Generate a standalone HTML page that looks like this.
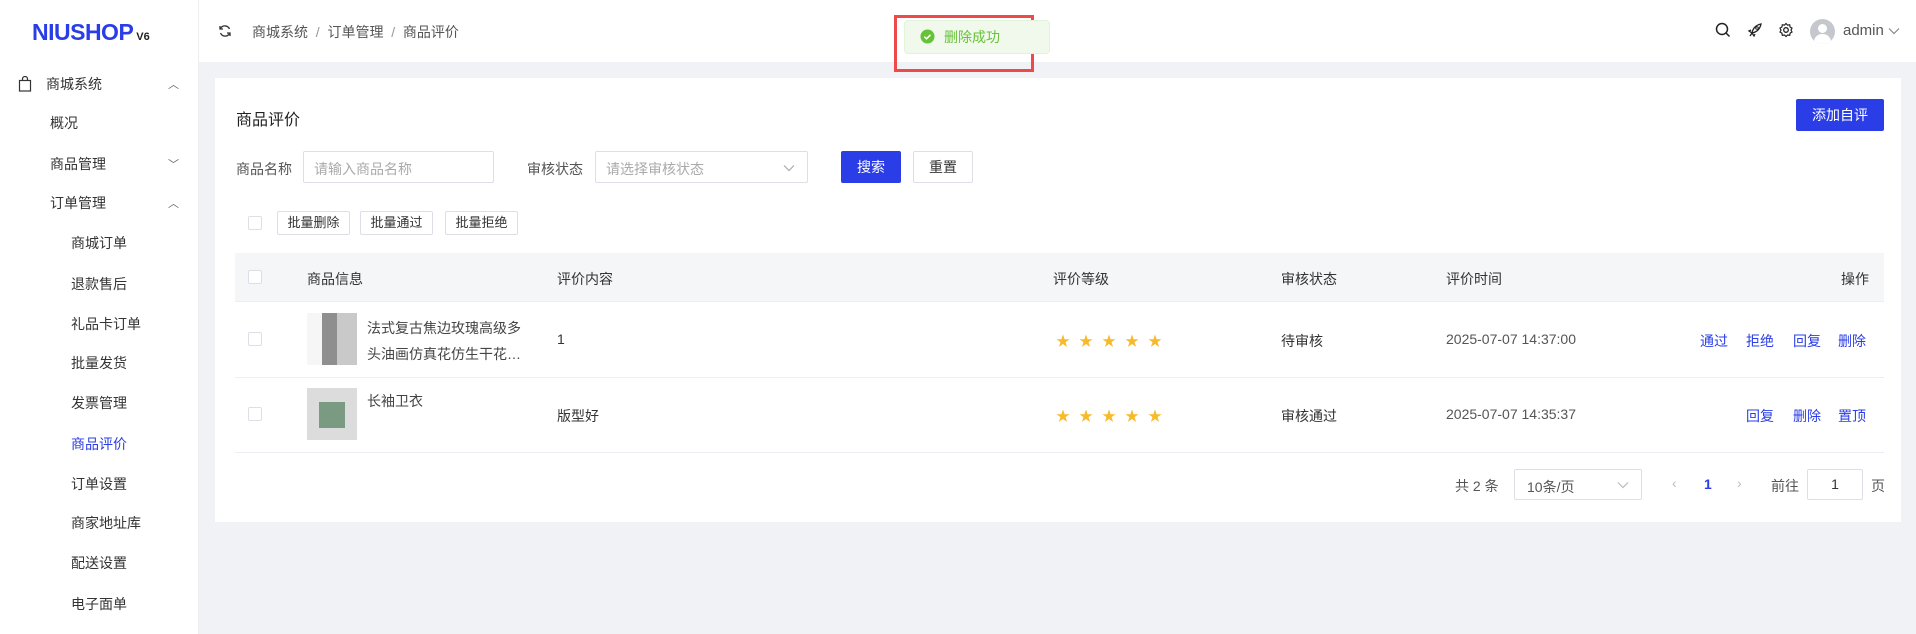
<!DOCTYPE html>
<html><head><meta charset="utf-8"><style>
*{margin:0;padding:0;box-sizing:border-box}
body{width:1916px;height:634px;background:#f0f2f5;font-family:"Liberation Sans","Noto Sans CJK SC",sans-serif;font-size:14px;color:#333;position:relative;overflow:hidden}
.a{position:absolute;white-space:nowrap}
.side{position:absolute;left:0;top:0;width:199px;height:634px;background:#fff;border-right:1px solid #eee}
.hdr{position:absolute;left:199px;top:0;width:1717px;height:62px;background:#fff}
.card{position:absolute;left:215px;top:78px;width:1686px;height:444px;background:#fff}
.cb{position:absolute;width:14px;height:14px;border:1px solid #dcdfe6;border-radius:2px;background:#fff}
.btn{position:absolute;border:1px solid #dcdfe6;border-radius:2px;background:#fff;font-size:13px;text-align:center}
.lk{color:#2a3de6}
.star{color:#f7ba2a;font-size:14px;letter-spacing:9px}
.mi{position:absolute;transform:translateY(-50%);white-space:nowrap}
</style></head><body>
<div class="side">
 <div class="a" style="left:32px;top:19px;font-size:23px;font-weight:bold;color:#2a3de6;letter-spacing:-0.5px">NIUSHOP<span style="font-size:11px;color:#222;margin-left:3px;letter-spacing:0">V6</span></div>
 <svg class="a" style="left:18px;top:76px" width="14" height="16" viewBox="0 0 14 16"><rect x="1.5" y="4.5" width="11" height="10.5" fill="none" stroke="#333" stroke-width="1.2"/><path d="M4.5 4.5V3a2.5 2.5 0 0 1 5 0v1.5" fill="none" stroke="#333" stroke-width="1.2"/></svg>
 <div class="mi" style="left:46px;top:84px">商城系统</div><div class="mi" style="left:168px;top:84px;font-size:11px;color:#666">︿</div>
 <div class="mi" style="left:50px;top:123px">概况</div>
 <div class="mi" style="left:50px;top:164px">商品管理</div><div class="mi" style="left:168px;top:164px;font-size:11px;color:#666">﹀</div>
 <div class="mi" style="left:50px;top:203px">订单管理</div><div class="mi" style="left:168px;top:203px;font-size:11px;color:#666">︿</div>
 <div class="mi" style="left:71px;top:243px">商城订单</div>
 <div class="mi" style="left:71px;top:284px">退款售后</div>
 <div class="mi" style="left:71px;top:324px">礼品卡订单</div>
 <div class="mi" style="left:71px;top:363px">批量发货</div>
 <div class="mi" style="left:71px;top:403px">发票管理</div>
 <div class="mi" style="left:71px;top:444px;color:#2a3de6">商品评价</div>
 <div class="mi" style="left:71px;top:484px">订单设置</div>
 <div class="mi" style="left:71px;top:523px">商家地址库</div>
 <div class="mi" style="left:71px;top:563px">配送设置</div>
 <div class="mi" style="left:71px;top:604px">电子面单</div>
</div>
<div class="hdr">
 <svg class="a" style="left:19px;top:24px" width="14" height="14" viewBox="0 0 14 14"><path d="M11.5 5A5 5 0 0 0 2.5 4.5M2.5 9a5 5 0 0 0 9 .5" fill="none" stroke="#333" stroke-width="1.3"/><path d="M2 2v3h3M12 12V9H9" fill="none" stroke="#333" stroke-width="1.3"/></svg>
 <div class="a" style="left:53px;top:22px;color:#555">商城系统 &nbsp;<span style="color:#999">/</span>&nbsp; 订单管理 &nbsp;<span style="color:#999">/</span>&nbsp; 商品评价</div>
 <svg class="a" style="left:1516px;top:22px" width="16" height="16" viewBox="0 0 16 16"><circle cx="7" cy="7" r="5.5" fill="none" stroke="#222" stroke-width="1.5"/><path d="M11 11l3.5 3.5" stroke="#222" stroke-width="1.5"/></svg>
 <svg class="a" style="left:1548px;top:22px" width="16" height="16" viewBox="0 0 16 16"><path d="M5 11C6 6 9 3 14 2c-1 5-4 8-9 9zM5 11l-2 3M4 8l-2 1 3 2M8 12l-1 2-2-3" fill="none" stroke="#222" stroke-width="1.3"/><circle cx="10" cy="6" r="1.3" fill="none" stroke="#222"/></svg>
 <svg class="a" style="left:1579px;top:22px" width="16" height="16" viewBox="0 0 16 16"><circle cx="8" cy="8" r="2.3" fill="none" stroke="#222" stroke-width="1.3"/><path d="M8 1.5l1.5 1.6 2.2-.3.4 2.2 1.9 1.1-1 2 1 1.9-1.9 1.1-.4 2.2-2.2-.3L8 14.5l-1.5-1.5-2.2.3-.4-2.2-1.9-1.1 1-1.9-1-2 1.9-1.1.4-2.2 2.2.3z" fill="none" stroke="#222" stroke-width="1.2"/></svg>
 <div class="a" style="left:1611px;top:19px;width:25px;height:25px;border-radius:50%;background:#c4c7cc;overflow:hidden"><div class="a" style="left:8px;top:5px;width:9px;height:9px;border-radius:50%;background:#fff"></div><div class="a" style="left:4px;top:15px;width:17px;height:12px;border-radius:8px 8px 0 0;background:#fff"></div></div>
 <div class="a" style="left:1644px;top:22px;color:#555;font-size:15px">admin</div>
 <svg class="a" style="left:1689px;top:27px" width="12" height="8" viewBox="0 0 12 8"><path d="M1 1.5l5 5 5-5" fill="none" stroke="#888" stroke-width="1.2"/></svg>
</div>
<div class="a" style="left:894px;top:15px;width:140px;height:57px;border:3px solid #ee4a4a"></div>
<div class="a" style="left:904px;top:20px;width:146px;height:34px;background:#f0f9eb;border:1px solid #e1f3d8;border-radius:4px"></div>
<svg class="a" style="left:920px;top:29px" width="15" height="15" viewBox="0 0 15 15"><circle cx="7.5" cy="7.5" r="7" fill="#67c23a"/><path d="M4.3 7.6l2.2 2.2 4-4" fill="none" stroke="#fff" stroke-width="1.5"/></svg>
<div class="a" style="left:944px;top:27px;color:#67c23a">删除成功</div>
<div class="card">
 <div class="a" style="left:21px;top:28px;font-size:16px;color:#222">商品评价</div>
 <div class="a" style="left:1581px;top:21px;width:88px;height:32px;background:#2a3de6;color:#fff;border-radius:2px;text-align:center;line-height:32px">添加自评</div>
 <div class="a" style="left:21px;top:81px;color:#555">商品名称</div>
 <div class="a" style="left:88px;top:73px;width:191px;height:32px;border:1px solid #dcdfe6;border-radius:2px;color:#aaa;padding:7px 10px">请输入商品名称</div>
 <div class="a" style="left:312px;top:81px;color:#555">审核状态</div>
 <div class="a" style="left:380px;top:73px;width:213px;height:32px;border:1px solid #dcdfe6;border-radius:2px;color:#aaa;padding:7px 10px">请选择审核状态</div>
 <svg class="a" style="left:568px;top:86px" width="12" height="8" viewBox="0 0 12 8"><path d="M1 1.5l5 5 5-5" fill="none" stroke="#aaa" stroke-width="1.2"/></svg>
 <div class="a" style="left:626px;top:73px;width:60px;height:32px;background:#2a3de6;color:#fff;border-radius:2px;text-align:center;line-height:32px">搜索</div>
 <div class="btn" style="left:698px;top:73px;width:60px;height:32px;line-height:30px;font-size:14px">重置</div>
 <div class="cb" style="left:33px;top:138px"></div>
 <div class="btn" style="left:62px;top:133px;width:73px;height:24px;line-height:22px">批量删除</div>
 <div class="btn" style="left:145px;top:133px;width:73px;height:24px;line-height:22px">批量通过</div>
 <div class="btn" style="left:230px;top:133px;width:73px;height:24px;line-height:22px">批量拒绝</div>
 <div class="a" style="left:20px;top:175px;width:1649px;height:49px;background:#f4f6f8;border-bottom:1px solid #ebeef5"></div>
 <div class="cb" style="left:33px;top:192px"></div>
 <div class="a" style="left:92px;top:191px">商品信息</div>
 <div class="a" style="left:342px;top:191px">评价内容</div>
 <div class="a" style="left:838px;top:191px">评价等级</div>
 <div class="a" style="left:1066px;top:191px">审核状态</div>
 <div class="a" style="left:1231px;top:191px">评价时间</div>
 <div class="a" style="left:1626px;top:191px">操作</div>
 <div class="a" style="left:20px;top:299px;width:1649px;height:1px;background:#ebeef5"></div>
 <div class="cb" style="left:33px;top:254px"></div>
 <div class="a" style="left:92px;top:235px;width:50px;height:52px;background:linear-gradient(90deg,#f6f6f6 0 30%,#8f8f8f 30% 60%,#c9c9c9 60%)"></div>
 <div class="a" style="left:152px;top:237px;line-height:26px;color:#444">法式复古焦边玫瑰高级多<br>头油画仿真花仿生干花…</div>
 <div class="a" style="left:342px;top:253px">1</div>
 <div class="a star" style="left:841px;top:253px">★★★★★</div>
 <div class="a" style="left:1066px;top:253px">待审核</div>
 <div class="a" style="left:1231px;top:253px;color:#555">2025-07-07 14:37:00</div>
 <div class="a lk" style="left:1485px;top:253px">通过</div>
 <div class="a lk" style="left:1531px;top:253px">拒绝</div>
 <div class="a lk" style="left:1578px;top:253px">回复</div>
 <div class="a lk" style="left:1623px;top:253px">删除</div>
 <div class="a" style="left:20px;top:374px;width:1649px;height:1px;background:#ebeef5"></div>
 <div class="cb" style="left:33px;top:329px"></div>
 <div class="a" style="left:92px;top:310px;width:50px;height:52px;background:#dcdcdc"><div class="a" style="left:12px;top:14px;width:26px;height:26px;background:#7a9a82"></div></div>
 <div class="a" style="left:152px;top:313px;color:#444">长袖卫衣</div>
 <div class="a" style="left:342px;top:328px">版型好</div>
 <div class="a star" style="left:841px;top:328px">★★★★★</div>
 <div class="a" style="left:1066px;top:328px">审核通过</div>
 <div class="a" style="left:1231px;top:328px;color:#555">2025-07-07 14:35:37</div>
 <div class="a lk" style="left:1531px;top:328px">回复</div>
 <div class="a lk" style="left:1578px;top:328px">删除</div>
 <div class="a lk" style="left:1623px;top:328px">置顶</div>
 <div class="a" style="left:1240px;top:398px;color:#555">共 2 条</div>
 <div class="a" style="left:1299px;top:391px;width:128px;height:31px;border:1px solid #dcdfe6;border-radius:2px;padding:7px 12px;color:#555">10条/页</div>
 <svg class="a" style="left:1402px;top:403px" width="12" height="8" viewBox="0 0 12 8"><path d="M1 1.5l5 5 5-5" fill="none" stroke="#bbb" stroke-width="1.2"/></svg>
 <div class="a" style="left:1457px;top:397px;color:#bbb">‹</div>
 <div class="a" style="left:1489px;top:398px;color:#2a3de6;font-weight:bold">1</div>
 <div class="a" style="left:1522px;top:397px;color:#bbb">›</div>
 <div class="a" style="left:1556px;top:398px;color:#555">前往</div>
 <div class="a" style="left:1592px;top:391px;width:56px;height:31px;border:1px solid #dcdfe6;border-radius:2px;text-align:center;line-height:29px">1</div>
 <div class="a" style="left:1656px;top:398px;color:#555">页</div>
</div>
</body></html>
